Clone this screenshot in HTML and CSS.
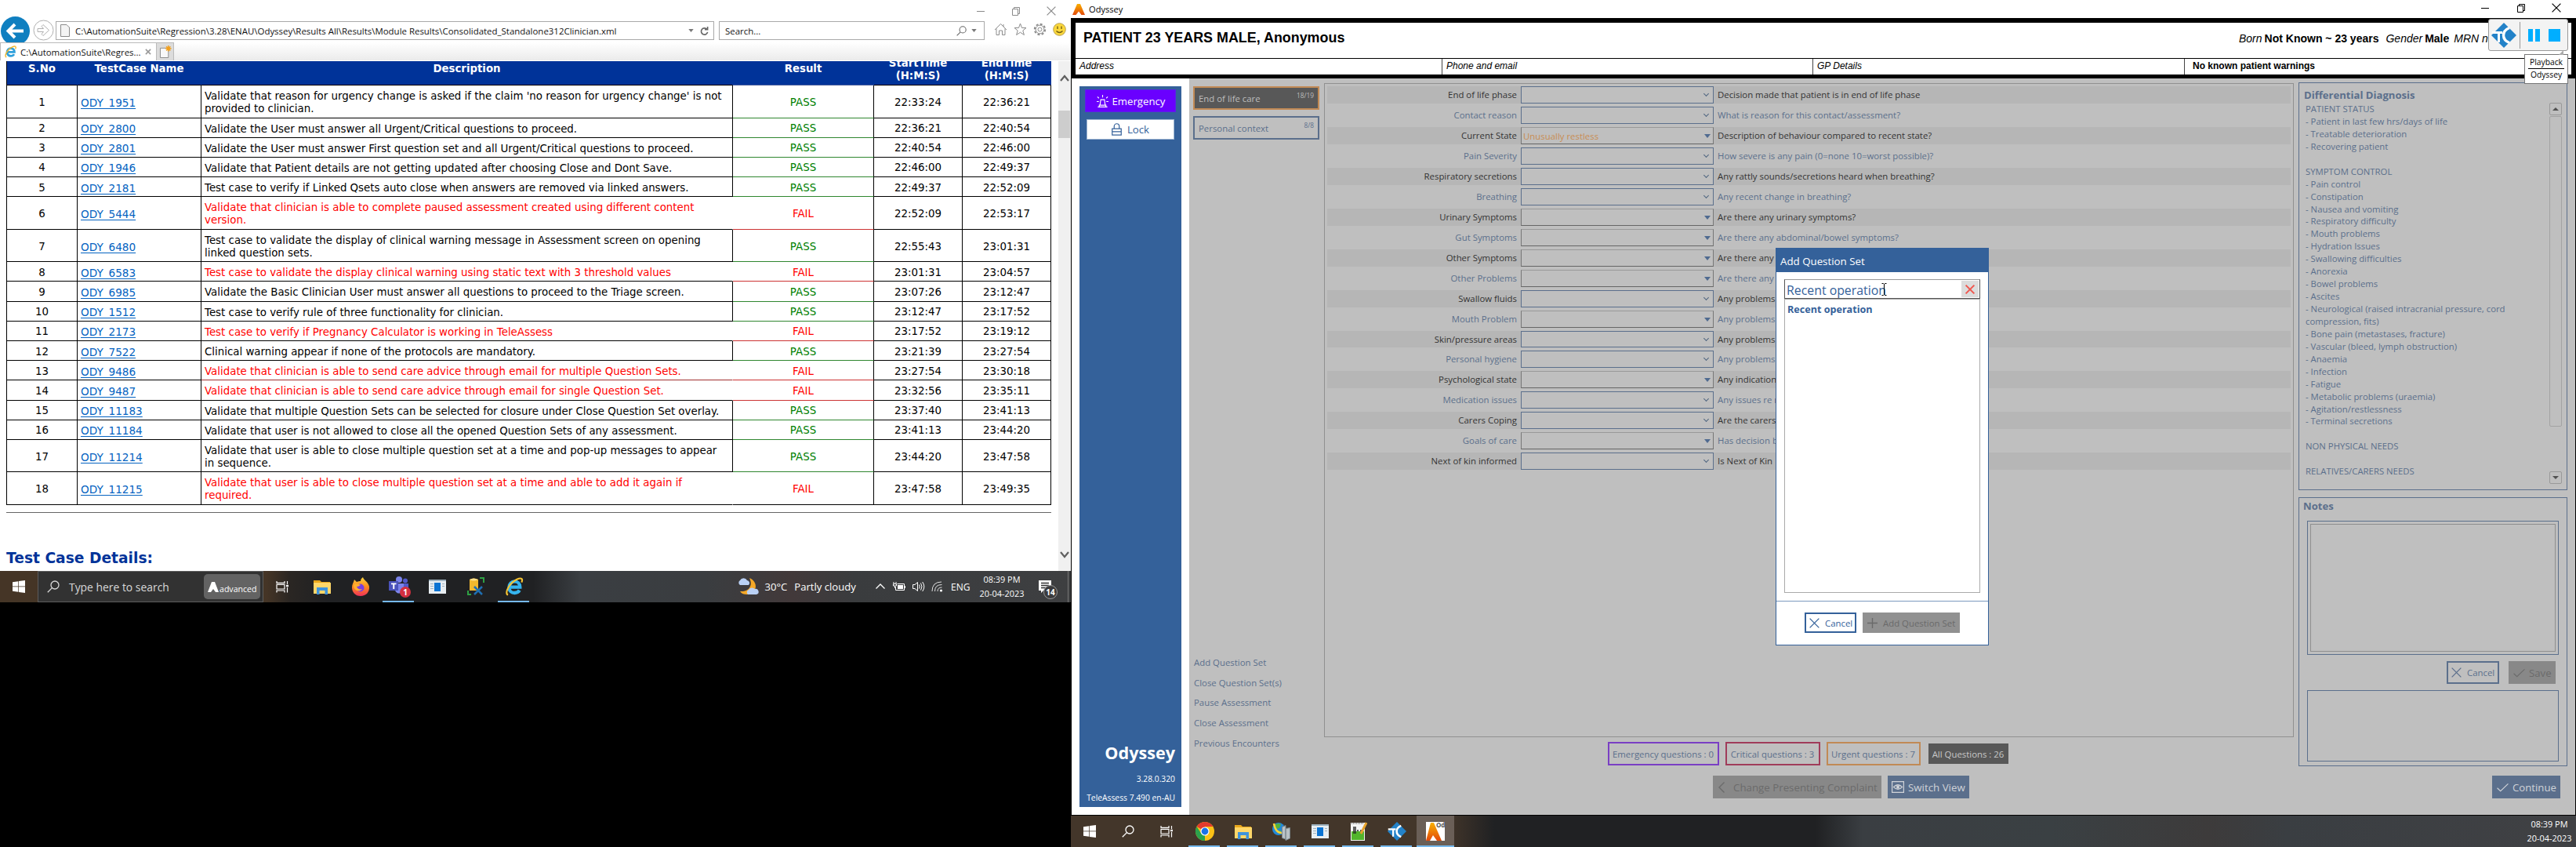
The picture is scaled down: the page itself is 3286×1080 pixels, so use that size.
FILE: index.html
```html
<!DOCTYPE html>
<html lang="en">
<head>
<meta charset="utf-8">
<title>Odyssey</title>
<link rel="stylesheet" href="styles.css">
</head>
<body>
<svg class="defs" aria-hidden="true">
  <defs>
    <linearGradient id="flame" x1="0" y1="0" x2="0" y2="1"><stop offset="0" stop-color="#f9b000"/><stop offset="1" stop-color="#e2490b"/></linearGradient>
    <linearGradient id="fox" x1="0" y1="0" x2="0" y2="1"><stop offset="0" stop-color="#ffd43c"/><stop offset=".5" stop-color="#ff8a1e"/><stop offset="1" stop-color="#f0305a"/></linearGradient>
  </defs>
  <symbol id="i-win" viewBox="0 0 16 16"><path fill="#fff" d="M0 2.2 7.3 1.2V7.6H0zM8 1.1 16 0V7.6H8zM0 8.3H7.3V14.8L0 13.8zM8 8.3H16V16L8 14.9z"/></symbol>
  <symbol id="i-search" viewBox="0 0 16 16"><g fill="none" stroke="currentColor" stroke-width="1.3"><circle cx="10" cy="6" r="5"/><path d="M6.4 9.6 .8 15.2"/></g></symbol>
  <symbol id="i-task" viewBox="0 0 16 16"><g fill="none" stroke="#fff" stroke-width="1.2"><path d="M1 1V3.4H11V1M1 15.4V13H11V15.4M1 5.4H11V11H1zM14.5 1V5M14.5 9V15.4"/><path d="M13 7H16" stroke-width="2.4"/></g></symbol>
  <symbol id="i-folder" viewBox="0 0 22 19"><path fill="#e9a81c" d="M0 1H8L10 3H21V8H0z"/><path fill="#ffd769" d="M0 4H22V18H0z"/><path fill="#3f94dc" d="M4 10H18V19H14.5V14H7.5V19H4z"/></symbol>
  <symbol id="i-app" viewBox="0 0 22 18"><path fill="#e8eef2" d="M0 0H22V18H0z"/><path fill="#9fb2bf" d="M0 0H22V2H0zM2 5H6V6H2zM2 8H6V9H2zM2 11H6V12H2zM17 5H20V6H17zM17 8H20V9H17z"/><path fill="#0b73d2" d="M7 4H15V15H7z"/></symbol>
  <symbol id="i-x" viewBox="0 0 12 12"><path fill="none" stroke="currentColor" stroke-width="1.2" d="M.6.6 11.4 11.4M11.4.6.6 11.4"/></symbol>
  <symbol id="i-min" viewBox="0 0 12 12"><path stroke="currentColor" d="M1 6.5H11"/></symbol>
  <symbol id="i-restore" viewBox="0 0 12 12"><path fill="none" stroke="currentColor" d="M1.5 3.5H8.5V11.5H1.5zM3.5 3.5V1.5H10.5V9.5H8.5"/></symbol>
  <symbol id="i-check" viewBox="0 0 16 12"><path fill="none" stroke="currentColor" stroke-width="1.2" d="M.6 6.8 5 11 15.4 1"/></symbol>
  <symbol id="i-odyssey" viewBox="0 0 16 14"><path fill="url(#flame)" d="M6 0H10L16 14H11.5L8 9.5 4.5 14H0z"/></symbol>
  <symbol id="i-tc" viewBox="0 0 32 32"><path fill="#2382c8" d="M16 0 32 16 16 32 0 16z"/><path fill="none" stroke="#fff" stroke-width="3" d="M1 12.500H14M9.500 12.500V25"/><path fill="none" stroke="#fff" stroke-width="3.400" d="M23 6.500C17 9 15.500 13 15.500 16S17 23 23 25.500"/></symbol>
</svg>

<main class="desk">
  <!-- Laptop screen: Internet Explorer with the results report -->
  <section class="left-screen">
    <div class="ie-title">
      <svg class="ic12"><use href="#i-min"/></svg><svg class="ic12"><use href="#i-restore"/></svg><svg class="ic12"><use href="#i-x"/></svg>
    </div>
    <div class="ie-nav">
      <svg class="ie-back" viewBox="0 0 37 37"><circle cx="18.500" cy="18.500" r="18.500" fill="#0f7fc0"/><path fill="none" stroke="#fff" stroke-width="4" d="M29 18.500H11M18 10 9.500 18.500 18 27"/></svg>
      <svg class="ie-fwd" viewBox="0 0 27 27"><circle cx="13.500" cy="13.500" r="12.500" fill="#fff" stroke="#b0b0b0"/><path fill="#fff" stroke="#b0b0b0" d="M6 11.500H13.500L11 8.500 13 6.500 20.500 13.500 13 20.500 11 18.500 13.500 15.500H6z"/></svg>
      <div class="ie-addr">
        <svg class="page" viewBox="0 0 12 16"><path fill="#f4f4f4" stroke="#8a8a8a" d="M.5.500H8L11.500 4V15.500H.5z"/></svg>
        <span class="ie-url">C:\AutomationSuite\Regression\3.28\ENAU\Odyssey\Results All\Results\Module Results\Consolidated_Standalone312Clinician.xml</span>
        <svg class="tri" viewBox="0 0 8 5"><path fill="#777" d="M0 0H8L4 5z"/></svg>
        <svg class="reload" viewBox="0 0 12 13"><path fill="none" stroke="#666" stroke-width="1.800" d="M9.500 4A4.500 4.500 0 1 0 10.500 8M10.500.500V4.500H6.500"/></svg>
      </div>
      <div class="ie-find"><span>Search...</span><svg class="mag"><use href="#i-search"/></svg><svg class="tri" viewBox="0 0 8 5"><path fill="#777" d="M0 0H8L4 5z"/></svg></div>
      <div class="ie-tools">
        <svg viewBox="0 0 17 17"><path fill="none" stroke="#8c8c8c" d="M1 9 8.500 1.500 16 9M3 7.500V15.500H6.500V10H10.500V15.500H14V7.500M12 2V5"/></svg>
        <svg viewBox="0 0 17 17"><path fill="none" stroke="#8c8c8c" d="M8.500 1 10.500 6.500H16L11.800 10 13.400 15.500 8.500 12.200 3.600 15.500 5.200 10 1 6.500H6.500z"/></svg>
        <svg viewBox="0 0 17 17"><circle cx="8.500" cy="8.500" r="6.700" fill="none" stroke="#8c8c8c" stroke-width="2" stroke-dasharray="3 2.260"/><circle cx="8.500" cy="8.500" r="5.300" fill="#fff" stroke="#8c8c8c"/><circle cx="8.500" cy="8.500" r="2.500" fill="none" stroke="#8c8c8c"/></svg>
        <svg viewBox="0 0 17 17"><circle cx="8.500" cy="8.500" r="7.800" fill="#fbd83c" stroke="#b8a050"/><path stroke="#6d5b14" stroke-width="1.300" fill="none" d="M6 4.500V8M11 4.500V8M4.500 10.500Q8.500 14.500 12.500 10.500"/></svg>
      </div>
    </div>
    <div class="ie-tabs">
      <div class="ie-tab">
        <svg class="e-ico" viewBox="0 0 18 18"><path fill="none" stroke="#2fa0dc" stroke-width="3.200" d="M4 9.500H14.500C14.500 6 12 4 9.300 4S4 6.300 4 9.700 6.500 15 9.300 15C11.500 15 13 14.200 14 12.500"/><path fill="none" stroke="#f0b62c" stroke-width="1.600" d="M3 17C-1 15 5 5 11.500 2 16 0 17.500 1.500 16 5"/></svg>
        <span>C:\AutomationSuite\Regres...</span>
        <svg class="tab-x" viewBox="0 0 9 9"><path stroke="#9a9a9a" stroke-width="1.800" d="M1 1 8 8M8 1 1 8"/></svg>
      </div>
      <div class="ie-new"><svg viewBox="0 0 16 17"><path fill="#f8f8f8" stroke="#8a8a8a" d="M.5 3.500H11.500V16.500H.5z"/><path stroke="#f0a020" stroke-width="1.600" d="M11.500 0V8M7.500 4H15.500M8.700 1.200 14.300 6.800M14.300 1.200 8.700 6.800"/></svg></div>
    </div>
    <div class="ie-body">
      <div class="report">
        <div class="grid">
          <div class="row head"><b>S.No</b><b>TestCase Name</b><b>Description</b><b>Result</b><b>StartTime (H:M:S)</b><b>EndTime (H:M:S)</b></div>
          <div class="row two pass"><i>1</i><a>ODY_1951</a><p>Validate that reason for urgency change is asked if the claim 'no reason for urgency change' is not<br>provided to clinician.</p><em>PASS</em><i>22:33:24</i><i>22:36:21</i></div>
          <div class="row pass"><i>2</i><a>ODY_2800</a><p>Validate the User must answer all Urgent/Critical questions to proceed.</p><em>PASS</em><i>22:36:21</i><i>22:40:54</i></div>
          <div class="row pass"><i>3</i><a>ODY_2801</a><p>Validate the User must answer First question set and all Urgent/Critical questions to proceed.</p><em>PASS</em><i>22:40:54</i><i>22:46:00</i></div>
          <div class="row pass"><i>4</i><a>ODY_1946</a><p>Validate that Patient details are not getting updated after choosing Close and Dont Save.</p><em>PASS</em><i>22:46:00</i><i>22:49:37</i></div>
          <div class="row pass"><i>5</i><a>ODY_2181</a><p>Test case to verify if Linked Qsets auto close when answers are removed via linked answers.</p><em>PASS</em><i>22:49:37</i><i>22:52:09</i></div>
          <div class="row two fail"><i>6</i><a>ODY_5444</a><p>Validate that clinician is able to complete paused assessment created using different content<br>version.</p><em>FAIL</em><i>22:52:09</i><i>22:53:17</i></div>
          <div class="row two pass"><i>7</i><a>ODY_6480</a><p>Test case to validate the display of clinical warning message in Assessment screen on opening<br>linked question sets.</p><em>PASS</em><i>22:55:43</i><i>23:01:31</i></div>
          <div class="row fail"><i>8</i><a>ODY_6583</a><p>Test case to validate the display clinical warning using static text with 3 threshold values</p><em>FAIL</em><i>23:01:31</i><i>23:04:57</i></div>
          <div class="row pass"><i>9</i><a>ODY_6985</a><p>Validate the Basic Clinician User must answer all questions to proceed to the Triage screen.</p><em>PASS</em><i>23:07:26</i><i>23:12:47</i></div>
          <div class="row pass"><i>10</i><a>ODY_1512</a><p>Test case to verify rule of three functionality for clinician.</p><em>PASS</em><i>23:12:47</i><i>23:17:52</i></div>
          <div class="row fail"><i>11</i><a>ODY_2173</a><p>Test case to verify if Pregnancy Calculator is working in TeleAssess</p><em>FAIL</em><i>23:17:52</i><i>23:19:12</i></div>
          <div class="row pass"><i>12</i><a>ODY_7522</a><p>Clinical warning appear if none of the protocols are mandatory.</p><em>PASS</em><i>23:21:39</i><i>23:27:54</i></div>
          <div class="row fail joined"><i>13</i><a>ODY_9486</a><p>Validate that clinician is able to send care advice through email for multiple Question Sets.</p><em>FAIL</em><i>23:27:54</i><i>23:30:18</i></div>
          <div class="row fail"><i>14</i><a>ODY_9487</a><p>Validate that clinician is able to send care advice through email for single Question Set.</p><em>FAIL</em><i>23:32:56</i><i>23:35:11</i></div>
          <div class="row pass"><i>15</i><a>ODY_11183</a><p>Validate that multiple Question Sets can be selected for closure under Close Question Set overlay.</p><em>PASS</em><i>23:37:40</i><i>23:41:13</i></div>
          <div class="row pass"><i>16</i><a>ODY_11184</a><p>Validate that user is not allowed to close all the opened Question Sets of any assessment.</p><em>PASS</em><i>23:41:13</i><i>23:44:20</i></div>
          <div class="row two pass"><i>17</i><a>ODY_11214</a><p>Validate that user is able to close multiple question set at a time and pop-up messages to appear<br>in sequence.</p><em>PASS</em><i>23:44:20</i><i>23:47:58</i></div>
          <div class="row two fail last"><i>18</i><a>ODY_11215</a><p>Validate that user is able to close multiple question set at a time and able to add it again if<br>required.</p><em>FAIL</em><i>23:47:58</i><i>23:49:35</i></div>
        </div>
        <hr class="rule">
        <h2 class="details">Test Case Details:</h2>
      </div>
      <div class="ie-scroll">
        <svg viewBox="0 0 12 9"><path fill="none" stroke="#606060" stroke-width="2.200" d="M1 8 6 2 11 8"/></svg>
        <div class="ie-thumb"></div>
        <svg viewBox="0 0 12 9"><path fill="none" stroke="#606060" stroke-width="2.200" d="M1 1 6 7 11 1"/></svg>
      </div>
    </div>
    <footer class="bar bar-left">
      <div class="cell start"><svg class="ic16"><use href="#i-win"/></svg></div>
      <div class="tb-search"><svg class="ic16"><use href="#i-search"/></svg><span>Type here to search</span><div class="chip-adv"><svg viewBox="0 0 14 13"><path fill="#fff" d="M5 0H9L14 13H10L7 9 4 13H0z"/></svg>advanced</div></div>
      <div class="cell"><svg class="ic16"><use href="#i-task"/></svg></div>
      <div class="cell wide"><svg class="folder"><use href="#i-folder"/></svg></div>
      <div class="cell"><svg class="ic24" viewBox="0 0 24 24"><path fill="url(#fox)" d="M12 24C5 24 1 19 1 13 1 9 3 7 4 3L7 6C9 5 11 5 12 5 12 2 14 1 15 0 16 4 22 6 23 12 23.500 19 19 24 12 24z"/><circle cx="11.500" cy="13.500" r="5" fill="#7a3fe0"/><path fill="#ffb02e" d="M3 10C6 7 10 9 12 10 10 11 9 12 7 12 8 15 11 16 14 15 11 19 3 18 3 10z"/></svg></div>
      <div class="cell on"><svg class="ic26" viewBox="0 0 26 26"><circle cx="13" cy="4" r="4" fill="#7b83eb"/><circle cx="21" cy="5.500" r="3" fill="#5059c9"/><path fill="#7b83eb" d="M8 9H19V18A6 6 0 0 1 8 18z"/><path fill="#5059c9" d="M19 9H25V16A4 4 0 0 1 19 18z"/><path fill="#4b53bc" d="M0 6H12V18H0z"/><path fill="#fff" d="M3 8.500H9.500V10.200H7.200V16H5.300V10.200H3z"/></svg><span class="badge">1</span></div>
      <div class="cell"><svg class="app"><use href="#i-app"/></svg></div>
      <div class="cell"><svg class="ic24" viewBox="0 0 24 24"><path fill="#f2b92e" d="M4 3Q9 0 15 3V17H4z"/><path fill="#ffe08a" d="M4 3Q9 6 15 3 9 0 4 3z"/><path fill="none" stroke="#2ea043" stroke-width="2" d="M17 1H22V7M6 22H2V17"/><path stroke="#1f6fb2" stroke-width="2.500" d="M10 12 20 22M20 12 10 22"/></svg></div>
      <div class="cell on"><svg class="ic24" viewBox="0 0 18 18"><path fill="none" stroke="#35b4ee" stroke-width="3.200" d="M4 9.500H14.500C14.500 6 12 4 9.300 4S4 6.300 4 9.700 6.500 15 9.300 15C11.500 15 13 14.200 14 12.500"/><path fill="none" stroke="#f6c433" stroke-width="1.600" d="M3 17C-1 15 5 5 11.500 2 16 0 17.500 1.500 16 5"/></svg></div>
      <div class="weather"><svg viewBox="0 0 25 24"><path fill="#f5a827" d="M14 1C26 6 24 21 11 22 7 22 4 21 2 18 13 19 19 11 14 1z"/><path fill="#b9d0f5" d="M2 10A3.500 3.500 0 0 1 2 4 5 5 0 0 1 11 4 3.500 3.500 0 0 1 13 10zM12 22A3.500 3.500 0 0 1 13 16 5 5 0 0 1 21 15 3.500 3.500 0 0 1 23 22z"/></svg><span>30°C</span><span>Partly cloudy</span></div>
      <div class="tray">
        <svg viewBox="0 0 16 16"><path fill="none" stroke="#fff" stroke-width="1.300" d="M2.500 10.500 8 5 13.500 10.500"/></svg>
        <svg viewBox="0 0 16 16"><path fill="none" stroke="#fff" d="M5.500 4.500H14.500V12.500H3.500V8.500M1 2V4M4 2V4M.5 4.500H4.500V7H.5zM2.500 7V10"/><path fill="#fff" d="M6 6H13V11H6zM14.500 7H16V10H14.500z"/></svg>
        <svg viewBox="0 0 16 16"><path fill="none" stroke="#fff" d="M.5 5.500H3L6.500 2.500V13.500L3 10.500H.5zM8.500 5.500Q10 8 8.500 10.500M10.500 3.500Q13.500 8 10.500 12.500M12.700 2Q17 8 12.700 14"/></svg>
        <svg viewBox="0 0 16 16"><path fill="none" stroke="#ddd" d="M1 14Q1 2 13 2M4.500 14Q4.500 5.500 13.500 5.500M8 14Q8 9 13.500 9"/><circle cx="12.500" cy="13" r="1.600" fill="#fff"/></svg>
      </div>
      <span class="lang">ENG</span>
      <div class="clock"><span>08:39 PM</span><span>20-04-2023</span></div>
      <div class="notif"><svg viewBox="0 0 26 26"><path fill="#fff" d="M1 2H17V15H7L4 18V15H1z"/><path stroke="#333" stroke-width="1.300" d="M4 5.500H14M4 8.500H14M4 11.500H11"/><circle cx="16" cy="17" r="8.500" fill="#3b3b3d" stroke="#999"/></svg><span>14</span></div>
      <div class="peek"></div>
    </footer>
  </section>

  <!-- External monitor: Odyssey TeleAssess -->
  <section class="right-screen">
    <header class="win-title">
      <svg class="flame"><use href="#i-odyssey"/></svg><span>Odyssey</span>
      <div class="win-ctl"><svg class="ic12"><use href="#i-min"/></svg><svg class="ic12"><use href="#i-restore"/></svg><svg class="ic12"><use href="#i-x"/></svg></div>
    </header>
    <div class="patient">
      <div class="p-top">
        <h1>PATIENT 23 YEARS MALE, Anonymous</h1>
        <div class="p-meta"><i>Born</i><b>Not Known ~ 23 years</b><i class="g">Gender</i><b class="m">Male</b><i class="n">MRN number</i></div>
      </div>
      <div class="p-sub"><i>Address</i><i>Phone and email</i><i>GP Details</i><b>No known patient warnings</b></div>
    </div>
    <div class="app-body">
      <nav class="side">
        <div class="btn-em"><svg viewBox="0 0 17 17"><path fill="none" stroke="#fff" stroke-width="1.200" d="M2 16.300H15M4 16V14H13V16M5 14 6 6.500H11L12 14M8.500 3.500V0M3.500 4.500 1.500 2.500M13.500 4.500 15.500 2.500M3.500 9H.5M13.500 9H16.500"/></svg>Emergency</div>
        <div class="btn-lock"><svg viewBox="0 0 14 17"><path fill="none" stroke="#34619a" stroke-width="1.300" d="M.8 7.500H13.200V16.200H.8zM1 11.500H13M3.500 7.500V4.500A3.500 3.800 0 0 1 10.500 4.500V7.500"/></svg>Lock</div>
        <div class="brand"><b>Odyssey</b><span>3.28.0.320</span><span>TeleAssess 7.490 en-AU</span></div>
      </nav>
      <div class="work">
        <div class="sets">
          <div class="set cur"><span>End of life care</span><small>18/19</small></div>
          <div class="set"><span>Personal context</span><small>8/8</small></div>
          <div class="links"><a>Add Question Set</a><a>Close Question Set(s)</a><a>Pause Assessment</a><a>Close Assessment</a><a>Previous Encounters</a></div>
        </div>
        <div class="center">
          <div class="qpanel">
            <div class="q"><label>End of life phase</label><div class="cb new"></div><span>Decision made that patient is in end of life phase</span></div>
            <div class="q"><label>Contact reason</label><div class="cb new"></div><span>What is reason for this contact/assessment?</span></div>
            <div class="q"><label>Current State</label><div class="cb">Unusually restless</div><span>Description of behaviour compared to recent state?</span></div>
            <div class="q"><label>Pain Severity</label><div class="cb new"></div><span>How severe is any pain (0=none 10=worst possible)?</span></div>
            <div class="q"><label>Respiratory secretions</label><div class="cb new"></div><span>Any rattly sounds/secretions heard when breathing?</span></div>
            <div class="q"><label>Breathing</label><div class="cb new"></div><span>Any recent change in breathing?</span></div>
            <div class="q"><label>Urinary Symptoms</label><div class="cb"></div><span>Are there any urinary symptoms?</span></div>
            <div class="q"><label>Gut Symptoms</label><div class="cb"></div><span>Are there any abdominal/bowel symptoms?</span></div>
            <div class="q"><label>Other Symptoms</label><div class="cb"></div><span>Are there any</span></div>
            <div class="q"><label>Other Problems</label><div class="cb"></div><span>Are there any</span></div>
            <div class="q"><label>Swallow fluids</label><div class="cb new"></div><span>Any problems</span></div>
            <div class="q"><label>Mouth Problem</label><div class="cb"></div><span>Any problems</span></div>
            <div class="q short"><label>Skin/pressure areas</label><div class="cb new"></div><span>Any problems</span></div>
            <div class="q"><label>Personal hygiene</label><div class="cb new"></div><span>Any problems</span></div>
            <div class="q"><label>Psychological state</label><div class="cb"></div><span>Any indication</span></div>
            <div class="q"><label>Medication issues</label><div class="cb new"></div><span>Any issues re m</span></div>
            <div class="q"><label>Carers Coping</label><div class="cb new"></div><span>Are the carers</span></div>
            <div class="q"><label>Goals of care</label><div class="cb"></div><span>Has decision b</span></div>
            <div class="q"><label>Next of kin informed</label><div class="cb new"></div><span>Is Next of Kin</span></div>
          </div>
          <div class="chips"><span class="c-em">Emergency questions : 0</span><span class="c-cr">Critical questions : 3</span><span class="c-ur">Urgent questions : 7</span><span class="c-all">All Questions : 26</span></div>
          <div class="acts">
            <div class="act off"><svg class="chev" viewBox="0 0 8 14"><path fill="none" stroke="currentColor" stroke-width="1.400" d="M7.500.500 1 7 7.500 13.500"/></svg>Change Presenting Complaint</div>
            <div class="act"><svg class="eye" viewBox="0 0 16 15"><path fill="none" stroke="currentColor" stroke-width="1.200" d="M.6.600H15.400V14.400H.6zM2.500 7.500Q8 2 13.500 7.500 8 13 2.500 7.500z"/><circle cx="8" cy="7.500" r="2" fill="currentColor"/></svg>Switch View</div>
          </div>
        </div>
        <aside class="rail">
          <section class="dd">
            <div class="dd-text">
              <h3>Differential Diagnosis</h3>
              <pre>PATIENT STATUS
- Patient in last few hrs/days of life
- Treatable deterioration
- Recovering patient

SYMPTOM CONTROL
- Pain control
- Constipation
- Nausea and vomiting
- Respiratory difficulty
- Mouth problems
- Hydration Issues
- Swallowing difficulties
- Anorexia
- Bowel problems
- Ascites
- Neurological (raised intracranial pressure, cord
compression, fits)
- Bone pain (metastases, fracture)
- Vascular (bleed, lymph obstruction)
- Anaemia
- Infection
- Fatigue
- Metabolic problems (uraemia)
- Agitation/restlessness
- Terminal secretions

NON PHYSICAL NEEDS

RELATIVES/CARERS NEEDS</pre>
            </div>
            <div class="dd-scroll"><div class="sb up"></div><div class="sb-thumb"></div><div class="sb down"></div></div>
          </section>
          <section class="notes">
            <h3>Notes</h3>
            <div class="memo"><div></div></div>
            <div class="n-acts"><div class="n-cancel"><svg class="ic13"><use href="#i-x"/></svg>Cancel</div><div class="n-save"><svg class="ick"><use href="#i-check"/></svg>Save</div></div>
            <div class="memo2"></div>
          </section>
          <div class="cont"><svg class="ick"><use href="#i-check"/></svg>Continue</div>
        </aside>
      </div>
    </div>
    <footer class="bar bar-right">
      <div class="cell start2"><svg class="ic16"><use href="#i-win"/></svg></div>
      <div class="cell"><svg class="ic16"><use href="#i-search"/></svg></div>
      <div class="cell"><svg class="ic16"><use href="#i-task"/></svg></div>
      <div class="cell on"><svg class="ic24" viewBox="0 0 24 24"><circle cx="12" cy="12" r="12" fill="#fbc116"/><path fill="#e33b2e" d="M12 12 1.600 6A12 12 0 0 1 22.400 6H12z"/><path fill="#2ba24c" d="M12 24A12 12 0 0 1 1.600 6L7.500 15 12 17.500z"/><circle cx="12" cy="12" r="5.600" fill="#fff"/><circle cx="12" cy="12" r="4.400" fill="#1a73e8"/></svg></div>
      <div class="cell on"><svg class="folder"><use href="#i-folder"/></svg></div>
      <div class="cell on"><svg class="ic24" viewBox="0 0 24 24"><circle cx="8" cy="9" r="8" fill="#2389d8"/><path fill="#53b33c" d="M2 5Q6 0 11 3L9 8 4 9zM6 12 11 11 10 16z"/><path fill="none" stroke="#f6d33a" stroke-width="2.500" d="M2 2Q4 14 12 14"/><path fill="#b9c2c6" stroke="#7b868c" d="M12.500 6.500 17 4.500V22L12.500 20.500zM17 8.500 22.500 7.500V21L17 23.500z"/></svg></div>
      <div class="cell on"><svg class="app"><use href="#i-app"/></svg></div>
      <div class="cell on"><svg class="ic24" viewBox="0 0 24 24"><path fill="#f4f4f4" d="M2 1H20V24H2z"/><path fill="#52b52c" d="M3 12H19V23H3z"/><path stroke="#333" d="M3 2H19" stroke-dasharray="1 1"/><path stroke="#222" stroke-width="1.400" d="M6 6V15M8 6V15M10 11H12M14 11H16"/><path stroke="#e6a22c" stroke-width="3" d="M22 1 15 15"/></svg></div>
      <div class="cell on"><svg class="ic24"><use href="#i-tc"/></svg></div>
      <div class="cell on active"><svg class="ic24" viewBox="0 0 24 24"><path fill="#fff" d="M0 0H24V24H0z"/><path fill="url(#flame)" d="M6 1H10L20 24H14L9 17 5 24H0z"/></svg><span class="od">Od</span></div>
      <div class="clock"><span>08:39 PM</span><span>20-04-2023</span></div>
    </footer>

    <!-- Overlays -->
    <div class="dialog">
      <div class="d-head">Add Question Set</div>
      <div class="d-body">
        <div class="d-input"><span>Recent operation</span><svg class="ibeam" viewBox="0 0 7 16"><path fill="none" stroke="#000" d="M.5.500H2.500L3.500 1.500 4.500.500H6.500M3.500 1V15M.5 15.500H2.500L3.500 14.500 4.500 15.500H6.500"/></svg><div class="d-clear"><svg class="ic12" viewBox="0 0 12 12"><path fill="none" stroke="currentColor" stroke-width="2" d="M.6.600 11.400 11.400M11.400.600.600 11.400"/></svg></div></div>
        <div class="d-list"><b>Recent operation</b></div>
      </div>
      <div class="d-foot"><div class="d-cancel"><svg class="ic13"><use href="#i-x"/></svg>Cancel</div><div class="d-add"><svg class="ic13" viewBox="0 0 13 13"><path stroke="currentColor" stroke-width="1.400" d="M6.500 0V13M0 6.500H13"/></svg>Add Question Set</div></div>
    </div>
    <div class="recorder"><svg class="tc"><use href="#i-tc"/></svg><div class="r-ctl"><i></i><i></i><b></b></div></div>
    <div class="tip"><span>Playback</span><span>Odyssey</span></div>
  </section>
</main>
</body>
</html>
```
FILE: styles.css
```css
* { box-sizing: border-box; }
body { margin: 0; background: #000; font: 11.4px "Open Sans", sans-serif; }
h1, h2, h3, p, pre { margin: 0; }
svg { display: block; flex: none; overflow: visible; }
.defs { position: absolute; width: 0; height: 0; }
.desk { display: flex; width: 3286px; height: 1080px; overflow: hidden; }
.ic12 { width: 12px; height: 12px; }
.ic13 { width: 13px; height: 13px; }
.ic16 { width: 16px; height: 16px; }
.ic24 { width: 24px; height: 24px; }
.ic26 { width: 26px; height: 26px; }
.folder { width: 22px; height: 19px; }
.app { width: 22px; height: 18px; }
.ick { width: 15px; height: 12px; }

/* Internet Explorer */
.left-screen { width: 1366px; height: 768px; background: #fff; display: flex; flex-direction: column; flex: none; }
.ie-title { height: 27px; display: flex; justify-content: flex-end; gap: 33px; padding: 8px 19px 0 0; color: #8a8a8a; }
.ie-nav { height: 27px; display: flex; align-items: flex-start; padding-left: 1px; }
.ie-back { width: 37px; height: 37px; margin-top: -6px; }
.ie-fwd { width: 27px; height: 27px; margin: -2px 2px 0 4px; }
.ie-addr, .ie-find { height: 24px; border: 1px solid #a9a9a9; display: flex; align-items: center; font-size: 11.45px; color: #111; background: #fff; }
.ie-addr { width: 840px; padding: 0 6px 0 5px; }
.page { width: 12px; height: 16px; margin-right: 7px; }
.ie-url { flex: 1; white-space: nowrap; }
.tri { width: 7px; height: 4px; }
.reload { width: 11px; height: 13px; margin-left: 8px; }
.ie-find { width: 339px; margin-left: 6px; padding: 0 9px 0 7px; }
.ie-find span { flex: 1; }
.mag { width: 13px; height: 13px; color: #666; margin-right: 6px; }
.ie-tools { display: flex; gap: 8px; padding: 2px 0 0 12px; }
.ie-tools svg { width: 17px; height: 17px; }
.ie-tabs { height: 24px; display: flex; border-bottom: 1px solid #fff; background: linear-gradient(#fff, #ebebeb); position: relative; }
.ie-tab { width: 200px; border: 1px solid #bbb; border-bottom: 0; background: #fff; display: flex; align-items: center; padding-left: 4px; font-size: 11.45px; color: #111; }
.e-ico { width: 17px; height: 16px; margin-right: 4px; }
.tab-x { width: 8px; height: 8px; margin-left: 5px; }
.ie-new { width: 22px; background: #dcdcdc; border: 1px solid #bbb; border-left: 0; border-bottom: 0; padding: 3px 0 0 4px; }
.ie-new svg { width: 15px; height: 16px; }
.ie-body { height: 650px; display: flex; overflow: hidden; }
.report { width: 1350px; padding-left: 8px; }
.grid { width: 1333px; font: 13.37px/16px "DejaVu Sans", sans-serif; border-left: 1px solid #000; }
.row { height: 25.2px; display: grid; grid-template-columns: 90px 158px 678px 180px 113px 113px; }
.row.two { height: 41.5px; }
.row > * { border: solid #000; border-width: 0 1px 1px 0; display: flex; align-items: center; justify-content: center; font-style: normal; font-weight: 400; padding-top: 3px; white-space: nowrap; }
.row > a { justify-content: flex-start; padding-left: 4px; color: #0563c1; font-size: 13.6px; text-decoration: underline; text-decoration-skip-ink: none; text-underline-offset: 2px; }
.row > p { justify-content: flex-start; padding-left: 4px; display: block; padding-top: 6px; }
.row.pass > em { color: #008000; border-bottom-color: #2f862f; }
.row.fail > em { color: #f00; border-bottom-color: #c33; }
.row.fail > p { color: #f00; border-right-color: transparent; }
.row.joined > p { border-bottom-color: #a03030; }
.row.last > em { border-bottom-color: #000; }
.row.head { height: 31px; grid-template-rows: 31px; background: #039; overflow: hidden; }
.row.head > b { font-weight: 700; font-size: 13.3px; color: #fff; border-color: #039 #039 #000; padding: 0 18px 12px; align-items: flex-end; white-space: nowrap; text-align: center; }
.row.head > b:nth-child(4) { border-bottom-color: #4d5f9c; }
.row.head > b:nth-child(n+5) { white-space: normal; padding-bottom: 3px; }
.rule { margin: 9px 0 0; width: 1333px; border: 0; border-top: 1px solid #666; }
.details { font: 700 18.66px/24px "DejaVu Sans", sans-serif; color: #039; margin-top: 46px; }
.ie-scroll { width: 16px; background: #f0f0f0; display: flex; flex-direction: column; align-items: center; padding: 17px 1px 16px 0; }
.ie-scroll svg { width: 12px; height: 9px; }
.ie-thumb { width: 15px; height: 35px; background: #cdcdcd; margin: 37px 0 auto; }

/* Taskbars */
.bar { height: 40px; display: flex; color: #fff; flex: none; }
.bar-left { background: linear-gradient(90deg, #453526 0, #453526 340px, #2a2623 370px, #202123 420px, #202123 680px, #3a3e42 740px, #3a3d40 900px, #42393a 1010px, #3a3c3e 1090px, #3e3f41 100%); }
.bar-right { background: linear-gradient(90deg, #43362a 0, #43362a 480px, #202123 540px, #202123 950px, #3a3e42 1010px, #3a4043 1250px, #3d3b3b 1450px, #3a3e42 1550px, #404144 100%); }
.cell { width: 49px; display: flex; align-items: center; justify-content: center; position: relative; flex: none; }
.cell.on::after { content: ""; position: absolute; left: 4px; right: 5px; bottom: 0; height: 2px; background: #76b9ed; }
.start { width: 48px; }
.tb-search { width: 288px; background: #323232; border: 1px solid #5c5c5c; display: flex; align-items: center; padding: 0 3px 0 11px; font-size: 13.9px; color: #d8d8d8; }
.tb-search span { margin-left: 12px; flex: 1; }
.chip-adv { width: 72px; height: 32px; border-radius: 5px; background: #636363; color: #fff; font-size: 10.6px; display: flex; align-items: center; padding: 5px 0 0 5px; }
.chip-adv svg { width: 14px; height: 13px; margin: -5px 1px 0 0; }
.cell.wide { width: 51px; padding-left: 2px; }
.bar-left .cell { left: -1px; }
.bar-left .cell.start { left: 0; }
.badge { position: absolute; left: 26px; top: 20px; width: 14px; height: 14px; border-radius: 50%; background: #d32f3f; font: 700 10px/14px "Open Sans", sans-serif; text-align: center; }
.weather { margin-left: auto; display: flex; align-items: center; font-size: 13.1px; gap: 9px; }
.weather svg { width: 25px; height: 24px; }
.tray { display: flex; align-items: center; gap: 8.4px; margin-left: 23px; }
.tray svg { width: 16px; height: 16px; }
.lang { width: 24px; margin-left: 9px; align-self: center; font-size: 12px; }
.clock { display: flex; flex-direction: column; align-items: center; justify-content: center; font-size: 10.9px; line-height: 18px; }
.bar-left .clock { width: 60px; margin-left: 11px; }
.notif { width: 26px; margin: 10px 12px 0 16px; position: relative; }
.notif svg { width: 26px; height: 26px; }
.notif span { position: absolute; left: 8px; width: 16px; top: 9px; text-align: center; font: 700 10px/16px "Open Sans", sans-serif; }
.peek { width: 4px; border-left: 1px solid #777; }
.bar-right .start2 { width: 48px; }
.bar-right .clock { width: 60px; margin: 0 4px 0 auto; }
.cell.active { background: #6a5f57; width: 48px; margin-left: 1px; }
.cell.active::after { left: 0; right: 0; }
.od { position: absolute; left: 25px; top: 7px; font: 700 8px/10px "Open Sans", sans-serif; color: #555; }

/* Odyssey window */
.right-screen { width: 1920px; height: 1080px; position: relative; background: #fff; display: flex; flex-direction: column; flex: none; }
.win-title { height: 23px; display: flex; align-items: center; padding-left: 2px; font-size: 11.1px; color: #000; flex: none; }
.flame { width: 16px; height: 14px; margin-right: 5px; }
.win-ctl { display: flex; gap: 33.5px; margin: -3px 19px 0 auto; }
.patient { height: 77px; border: 6px solid #000; border-bottom-width: 5px; font-family: "Liberation Sans", Arial, sans-serif; color: #000; background: #fff; flex: none; }
.p-top { height: 45px; display: flex; justify-content: space-between; padding: 0 0 8px 10px; align-items: center; }
.p-top h1 { font-size: 17.9px; line-height: 22px; }
.p-meta { display: flex; font-size: 14px; width: 424px; overflow: hidden; white-space: nowrap; padding-top: 3px; }
.p-meta b { margin-left: 3px; }
.p-meta .g { margin-left: 9px; }
.p-meta .m { margin-left: 3px; }
.p-meta .n { margin-left: 6px; }
.p-sub { height: 21px; border-top: 1px solid #000; display: grid; grid-template-columns: 468px 473px 474px 1fr; font-size: 12px; line-height: 19px; }
.p-sub > * { padding-left: 5px; border-right: 1px solid #444; }
.p-sub > :last-child { padding-left: 10px; border-right: 0; }
.app-body { height: 940px; display: flex; border: 1px solid #000; border-top: 0; padding-left: 10px; flex: none; }
.side { width: 130px; margin: 10px 10px 10px 0; background: #34619a; color: #fff; display: flex; flex-direction: column; padding: 4px 7px 0; flex: none; }
.btn-em { height: 29px; background: #6a00ff; display: flex; align-items: center; justify-content: center; font-size: 13.2px; gap: 4px; border: 1px solid #5a20e8; }
.btn-em svg { width: 17px; height: 16px; }
.btn-lock { height: 26px; margin: 9px 2px 0; background: #fff; color: #34619a; display: flex; align-items: center; justify-content: center; font-size: 13.2px; gap: 7px; border: 1px solid #9fb6d2; }
.btn-lock svg { width: 13px; height: 16px; }
.brand { margin-top: auto; display: flex; flex-direction: column; align-items: flex-end; font-size: 10.3px; line-height: 24px; padding-right: 1px; }
.brand b { font-size: 21.6px; line-height: 42px; }
.work { flex: 1; background: #bfbfbf; display: flex; color: #5b6f8c; }
.sets { width: 172px; padding: 10px 6px 0 5px; display: flex; flex-direction: column; flex: none; }
.set { height: 30px; border: 2px solid #5b6f8c; margin-bottom: 8px; display: flex; justify-content: space-between; padding: 0 5px; flex: none; }
.set span { line-height: 28px; }
.set small { font-size: 8.3px; line-height: 19px; }
.set.cur { background: #585858; border-color: #c18a55; color: #bdbdbd; }
.links { display: flex; flex-direction: column; margin-top: 646px; padding-left: 1px; line-height: 25.7px; }
.center { width: 1237px; padding-top: 6px; flex: none; }
.qpanel { height: 834px; border: 1px solid #909090; padding: 3px; }
.q { height: 22px; margin-bottom: 4px; display: flex; align-items: center; line-height: 22px; }
.q:nth-child(odd) { background: #b6b6b6; color: #333; }
.q.short { height: 21px; }
.q label { width: 247px; padding-right: 5px; text-align: right; }
.q span { padding-left: 5px; }
.cb { width: 246px; height: 100%; border: 1px solid #666; border-color: #999 #777 #666; background: #bfbfbf; color: #c98d52; padding-left: 2px; line-height: 21px; position: relative; }
.cb::after { content: ""; position: absolute; right: 3px; top: 8px; border: 4px solid transparent; border-top: 5px solid #4f6a90; border-bottom: 0; }
.cb.new { border-color: #5b6f8c; }
.cb.new::after { width: 4px; height: 4px; border: solid #4f6580; border-width: 0 1.5px 1.5px 0; transform: rotate(45deg); right: 6px; top: 6px; box-sizing: content-box; }
.chips { display: flex; justify-content: center; align-items: center; margin: 6px 0 0 -3px; }
.chips span { height: 30px; line-height: 27px; border: 2px solid; text-align: center; white-space: nowrap; color: #5b6f8c; }
.chips .c-em { width: 142px; border-color: #7a3fc4; }
.c-cr { width: 121px; margin-left: 8px; }
.c-ur { width: 120px; margin-left: 8px; }
.chips .c-cr { border-color: #a03c5a; }
.chips .c-ur { border-color: #c18a55; }
.chips .c-all { width: 102px; height: 26px; margin-left: 10px; background: #585858; border: 0; color: #c8c8c8; }
.acts { display: flex; gap: 8px; margin: 13px 0 0 496px; }
.act { height: 29px; display: flex; align-items: center; background: #5b6f8c; color: #d0d3d8; font-size: 13.3px; padding: 0 5px; gap: 5px; width: 104px; white-space: nowrap; }
.act.off { width: 215px; background: #888; color: #6b6b6b; gap: 11px; padding-left: 7px; }
.chev { width: 8px; height: 14px; }
.eye { width: 16px; height: 15px; }
.rail { width: 343px; margin-left: 6px; padding-top: 5px; display: flex; flex-direction: column; flex: none; }
.rail h3 { font-size: 13.1px; line-height: 18px; }
.dd { height: 520px; border: 1px solid #5b6f8c; display: flex; justify-content: space-between; padding: 6px 6px 0; }
.dd pre { font: 11.35px/15.93px "Open Sans", sans-serif; padding: 1px 0 0 2px; }
.dd-scroll { width: 16px; padding-top: 19px; }
.sb { height: 16px; border: 1px solid #999; border-radius: 2px; padding: 5px 0 0 3px; }
.sb::before { content: ""; display: block; width: 0; border: 4px solid transparent; border-top: 0; border-bottom: 4px solid #505050; }
.sb.down::before { border-top: 4px solid #505050; border-bottom: 0; }
.sb-thumb { height: 396px; margin: 1px 0 57px; border: 1px solid #a3a3a3; border-radius: 2px; }
.notes { height: 343px; margin-top: 9px; border: 1px solid #5b6f8c; padding: 1px 10px 5px; display: flex; flex-direction: column; }
.notes h3 { margin-left: -5px; }
.memo { height: 167px; border: 1px solid #5b6f8c; padding: 3px; margin-top: 10px; flex: none; }
.memo div { height: 100%; border: 1px solid #8f8f8f; }
.memo { height: 171px; }
.n-acts { display: flex; justify-content: flex-end; gap: 12px; margin: 8px 4px 8px 0; }
.n-acts > * { height: 29px; display: flex; align-items: center; }
.n-cancel { width: 67px; border: 2px solid #5b6f8c; padding-left: 4px; gap: 7px; }
.n-save { width: 60px; background: #888; color: #6b6b6b; padding-left: 6px; gap: 5px; font-size: 13.2px; }
.memo2 { height: 91px; border: 1px solid #5b6f8c; }
.cont { width: 87px; height: 29px; margin: 12px 9px 0 auto; background: #5b6f8c; color: #d0d3d8; display: flex; align-items: center; padding-left: 6px; gap: 5px; font-size: 13.2px; }

/* Modal dialog */
.dialog { position: absolute; left: 899px; top: 316px; width: 272px; height: 507px; background: #fff; border: 1px solid #34619a; color: #34619a; display: flex; flex-direction: column; }
.d-head { height: 30px; background: #34619a; color: #fff; font-size: 13.3px; line-height: 33px; padding-left: 5px; flex: none; }
.d-body { height: 420px; padding: 9px 10px 0; border-bottom: 1px solid #7c99bf; }
.d-input { height: 25px; border: 1px solid #555; border-top-color: #999; display: flex; align-items: center; font-size: 15.85px; padding-left: 2px; }
.d-input span { padding-top: 2px; }
.ibeam { width: 7px; height: 16px; margin-left: -6px; }
.d-clear { width: 22px; height: 21px; background: #dcdcdc; color: #f0564e; margin: 0 1px 0 auto; display: flex; align-items: center; justify-content: center; }
.d-list { height: 375px; border: 1px solid #aaa; padding: 4px 3px; font-size: 12.6px; line-height: 18px; }
.d-list b { font-weight: 700; }
.d-foot { display: flex; justify-content: center; gap: 8px; padding-top: 14px; }
.d-foot > * { height: 26px; display: flex; align-items: center; white-space: nowrap; }
.d-cancel { width: 66px; border: 2px solid #34619a; padding-left: 4px; gap: 7px; }
.d-add { width: 124px; background: #919191; color: #6a6a6a; padding-left: 6px; gap: 7px; }

/* TestComplete recorder toolbar */
.recorder { position: absolute; left: 1808px; top: 24px; width: 102px; height: 41px; background: #f3f3f3; border: 1px solid #999; border-radius: 3px; display: flex; align-items: center; padding-left: 3px; }
.tc { width: 32px; height: 32px; }
.r-ctl { height: 34px; border-left: 1px solid #999; margin-left: 4px; padding-left: 10px; display: flex; align-items: center; }
.r-ctl i { width: 6px; height: 16px; background: #00aeff; margin-right: 3px; }
.r-ctl b { width: 15px; height: 16px; background: #00aeff; margin-left: 8px; }
.tip { position: absolute; left: 1854px; top: 69px; width: 56px; height: 38px; background: #fff; border: 1px solid #777; padding: 2px 4px; display: flex; flex-direction: column; font-size: 10.3px; line-height: 15px; color: #000; text-align: center; }
.tip span:first-child { border-bottom: 1px solid #000; }
.tip::before { content: ""; position: absolute; right: 5px; top: -6px; width: 0; border-left: 6px solid transparent; border-bottom: 6px solid #aaa; }
```
